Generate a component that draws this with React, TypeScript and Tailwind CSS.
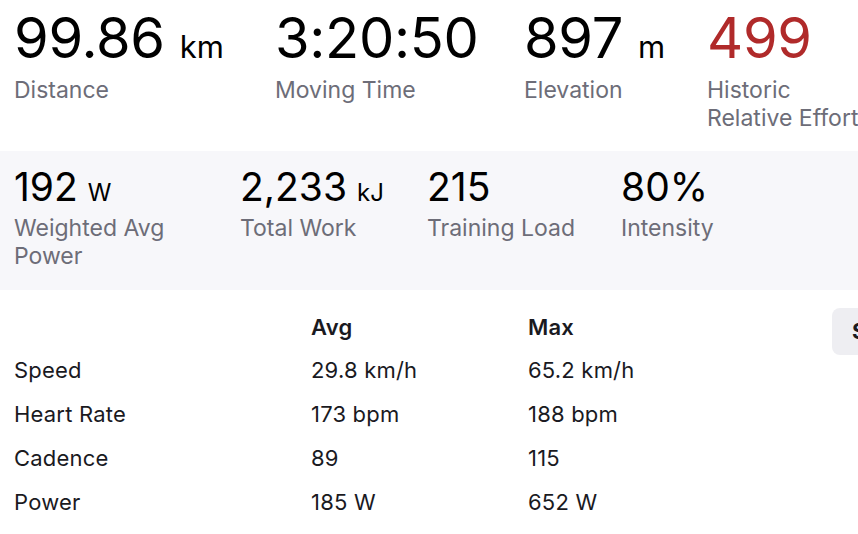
const font = "font-['Inter','Noto_Sans',sans-serif]";

type Stat = {
  value: string;
  unit?: string;
  label: React.ReactNode;
  red?: boolean;
  width: string;
};

const primary: Stat[] = [
  { value: "99.86", unit: "km", label: "Distance", width: "w-[213px]" },
  { value: "3:20:50", label: "Moving Time", width: "w-[201px]" },
  { value: "897", unit: "m", label: "Elevation", width: "w-[135px]" },
  {
    value: "499",
    label: (
      <>
        Historic
        <br />
        Relative Effort
      </>
    ),
    red: true,
    width: "w-[180px]",
  },
];

const secondary: Stat[] = [
  {
    value: "192",
    unit: "W",
    label: (
      <>
        Weighted Avg
        <br />
        Power
      </>
    ),
    width: "w-[178px]",
  },
  { value: "2,233", unit: "kJ", label: "Total Work", width: "w-[139px]" },
  { value: "215", label: "Training Load", width: "w-[146px]" },
  { value: "80%", label: "Intensity", width: "w-[140px]" },
];

const rows = [
  { name: "Speed", avg: "29.8 km/h", max: "65.2 km/h" },
  { name: "Heart Rate", avg: "173 bpm", max: "188 bpm" },
  { name: "Cadence", avg: "89", max: "115" },
  { name: "Power", avg: "185 W", max: "652 W" },
];

const PrimaryStat: React.FC<{ stat: Stat }> = ({ stat }) => (
  <li className={`shrink-0 ${stat.width}`}>
    <div
      className={`flex items-baseline h-[60px] ${
        stat.red ? "text-[#b02a2a]" : "text-black"
      }`}
    >
      <span className="text-[56px] leading-[60px] tracking-[-0.3px]">{stat.value}</span>
      {stat.unit && (
        <span className="ml-[15px] text-[31px] leading-none">{stat.unit}</span>
      )}
    </div>
    <div className="mt-[8px] text-[23px] leading-[28px] text-[#6d6d78] whitespace-nowrap">
      {stat.label}
    </div>
  </li>
);

const SecondaryStat: React.FC<{ stat: Stat }> = ({ stat }) => (
  <li className={`shrink-0 ${stat.width}`}>
    <div className="flex items-baseline h-[44px] text-black">
      <span className="text-[39px] leading-[44px]">{stat.value}</span>
      {stat.unit && (
        <span className="ml-[10px] text-[24px] leading-none">{stat.unit}</span>
      )}
    </div>
    <div className="mt-[5px] text-[23px] leading-[28px] text-[#6d6d78] whitespace-nowrap">
      {stat.label}
    </div>
  </li>
);

export default function App() {
  return (
    <div className={`w-[858px] h-[534px] overflow-hidden bg-white ${font}`}>
      <ul className="flex gap-[48px] px-[14px] pt-[8px] h-[151px]">
        {primary.map((s) => (
          <PrimaryStat key={s.value} stat={s} />
        ))}
      </ul>

      <ul className="flex gap-[48px] bg-[#f7f7fa] px-[14px] pt-[14px] h-[139px]">
        {secondary.map((s) => (
          <SecondaryStat key={s.value} stat={s} />
        ))}
      </ul>

      <div className="flex pl-[14px] pt-[18px]">
        <table className="w-[780px] shrink-0 text-[22px] tracking-[0.2px] leading-[44px] text-[#1a1a1f] border-collapse">
          <thead>
            <tr className="text-left">
              <th className="w-[297px] font-normal" />
              <th className="w-[217px] font-semibold leading-[22px] pt-[8px] pb-[10px]">Avg</th>
              <th className="font-semibold leading-[22px] pt-[8px] pb-[10px]">Max</th>
            </tr>
          </thead>
          <tbody>
            {rows.map((r) => (
              <tr key={r.name}>
                <td>{r.name}</td>
                <td>{r.avg}</td>
                <td>{r.max}</td>
              </tr>
            ))}
          </tbody>
        </table>
        <button className="ml-[38px] h-[47px] shrink-0 rounded-[8px] bg-[#eeeef2] px-[20px] text-[22px] font-bold text-[#1a1a1f]">
          Show
        </button>
      </div>
    </div>
  );
}
